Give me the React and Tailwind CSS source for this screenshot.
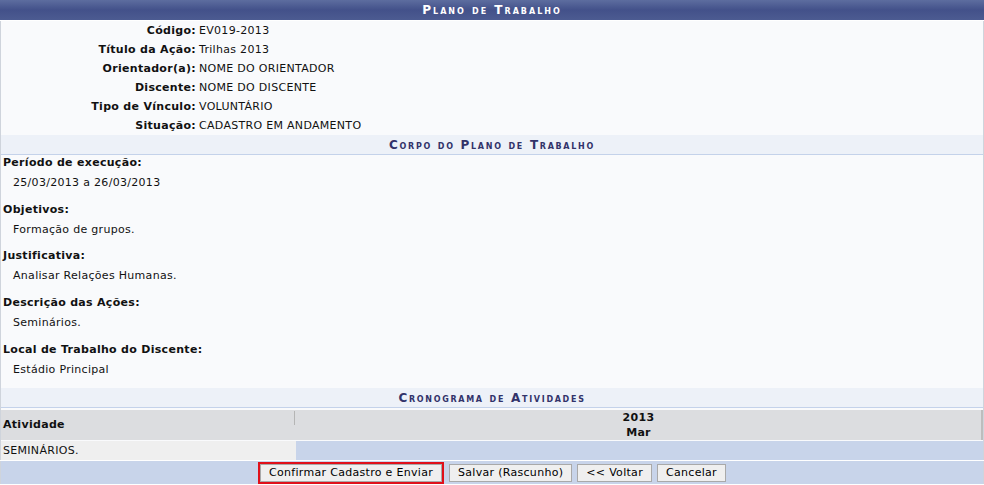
const info = [
  ["Código:", "EV019-2013"],
  ["Título da Ação:", "Trilhas 2013"],
  ["Orientador(a):", "NOME DO ORIENTADOR"],
  ["Discente:", "NOME DO DISCENTE"],
  ["Tipo de Vínculo:", "VOLUNTÁRIO"],
  ["Situação:", "CADASTRO EM ANDAMENTO"],
];

const sections = [
  ["Período de execução:", "25/03/2013 a 26/03/2013"],
  ["Objetivos:", "Formação de grupos."],
  ["Justificativa:", "Analisar Relações Humanas."],
  ["Descrição das Ações:", "Seminários."],
  ["Local de Trabalho do Discente:", "Estádio Principal"],
];

function SubHeader({ children }) {
  return (
    <div className="h-[20px] bg-[#edf1f8] border-b border-[#c4d2ea] flex items-center justify-center text-[12px] font-bold text-[#32336a] tracking-[1.7px] [font-variant:small-caps]">
      {children}
    </div>
  );
}

function Button({ children }) {
  return (
    <button className="h-[18px] px-[8px] bg-[#efefef] border border-[#a9a9a9] text-[11px] leading-none text-black tracking-[0.3px]">
      {children}
    </button>
  );
}

export default function App() {
  return (
    <div className="w-[984px] h-[485px] bg-white font-['DejaVu_Sans','Verdana',sans-serif] text-[11px] tracking-[0.3px] text-[#111]">
      <div className="h-[20px] bg-gradient-to-b from-[#5d6d9f] via-[#43518a] to-[#4c5b91] flex items-center justify-center text-white text-[12px] font-bold tracking-[2px] [font-variant:small-caps]">
        Plano de Trabalho
      </div>
      <div className="mt-px border-x border-[#cfd4dc] bg-[#f9fafc]">
        <div className="flex flex-col">
          {info.map(([label, value]) => (
            <div key={label} className="h-[19px] pt-[2px] flex items-center">
              <span className="w-[198px] text-right font-bold pr-[3px]">{label}</span>
              <span>{value}</span>
            </div>
          ))}
        </div>
        <SubHeader>Corpo do Plano de Trabalho</SubHeader>
        <div className="flex flex-col">
          {sections.map(([label, value]) => (
            <div key={label} className="pb-[11.7px]">
              <div className="leading-[15px] pl-[2px] font-bold">{label}</div>
              <div className="mt-[5px] leading-[15px] pl-[12px]">{value}</div>
            </div>
          ))}
        </div>
        <SubHeader>Cronograma de Atividades</SubHeader>
        <div className="mt-[2px] grid grid-cols-[295px_1fr] bg-[#dcdde0] h-[30px] border-r-2 border-[#bdbdbd]">
          <div className="relative flex items-center pl-[2px] font-bold">
            Atividade
            <span className="absolute right-px top-[1px] h-[14px] w-px bg-[#b5b5b5]" />
          </div>
          <div className="flex flex-col items-center justify-center font-bold leading-[15px]">
            <span>2013</span>
            <span>Mar</span>
          </div>
        </div>
        <div className="mt-px grid grid-cols-[295px_1fr] h-[19px]">
          <div className="bg-[#efefef] flex items-center pl-[2px]">SEMINÁRIOS.</div>
          <div className="bg-[#c8d4ea]" />
        </div>
      </div>
      <div className="mt-px h-[23px] bg-[#c8d4ea] border-x border-[#cfd4dc] flex items-center justify-center gap-[5px]">
        <span className="border-2 border-[#e0101a] flex">
          <Button>Confirmar Cadastro e Enviar</Button>
        </span>
        <Button>Salvar (Rascunho)</Button>
        <Button>&lt;&lt; Voltar</Button>
        <Button>Cancelar</Button>
      </div>
    </div>
  );
}
